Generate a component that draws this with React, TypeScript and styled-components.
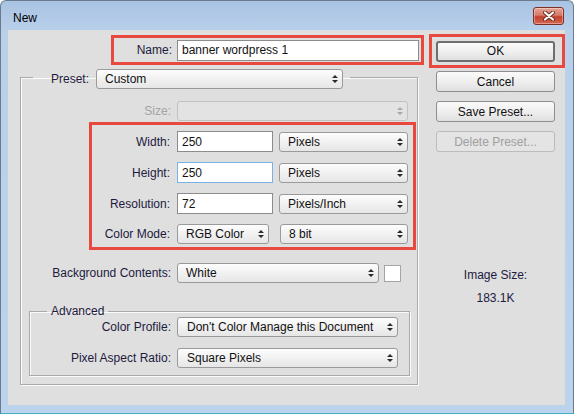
import React from "react";
import styled, { createGlobalStyle } from "styled-components";

const GlobalStyle = createGlobalStyle`
  html, body {
    margin: 0;
    padding: 0;
    background: #ffffff;
  }
  body {
    font-family: "Liberation Sans", Arial, sans-serif;
    font-size: 12px;
    color: #1d1a3d;
  }
  * {
    box-sizing: border-box;
  }
`;

const RED = "#e8483e";

const Window = styled.div`
  width: 574px;
  height: 414px;
  display: flex;
  flex-direction: column;
  padding: 0 8px 8px 7px;
  background: linear-gradient(#a9c3e2, #b9d0eb 30px, #bcd3ee);
  border: 1px solid #6b7b8e;
  border-bottom-color: #3fb2c6;
  border-radius: 6px 6px 0 0;
`;

const TitleBar = styled.div`
  height: 29px;
  flex: none;
  display: flex;
  align-items: center;
  justify-content: space-between;
  padding-left: 5px;
`;

const Title = styled.span`
  color: #000;
  font-size: 12px;
  padding-top: 5px;
`;

const CloseButton = styled.div`
  width: 31px;
  height: 18px;
  margin-right: 1px;
  margin-top: 1px;
  border: 1px solid #7d3126;
  border-radius: 3px;
  background: linear-gradient(#e8a597, #d47a68 45%, #c2412f 55%, #d6664f);
  box-shadow: inset 0 0 0 1px rgba(255, 255, 255, 0.35);
  display: flex;
  align-items: center;
  justify-content: center;
`;

const Client = styled.div`
  flex: 1;
  display: flex;
  background: #dfdfdf;
`;

const LeftColumn = styled.div`
  width: 421px;
  flex: none;
  display: flex;
  flex-direction: column;
  align-items: flex-start;
`;

const RightColumn = styled.div`
  flex: 1;
  display: flex;
  flex-direction: column;
  align-items: flex-start;
`;

const Callout = styled.div`
  border: 3px solid ${RED};
`;

const NameCallout = styled(Callout)`
  margin: 5px 0 0 103px;
  width: 313px;
  height: 30px;
  display: flex;
  align-items: center;
`;

const DimensionsCallout = styled(Callout)`
  margin: 1px 0 0 68px;
  width: 327px;
  padding: 6px 0 3px 0;
  display: flex;
  flex-direction: column;
  gap: 10px;
`;

const OkCallout = styled(Callout)`
  margin-top: 4px;
  width: 136px;
  height: 34px;
  padding-left: 4px;
  display: flex;
  align-items: center;
`;

const GroupBox = styled.fieldset`
  margin: 0;
  padding: 0;
  min-width: 0;
  border: 1px solid #a9a9a9;
  box-shadow: 1px 1px 0 #fbfbfb, inset 1px 1px 0 #fbfbfb;
  display: flex;
  flex-direction: column;
  align-items: flex-start;
`;

const PresetGroup = styled(GroupBox)`
  margin-left: 12px;
  width: 398px;
  padding-bottom: 8px;
`;

const AdvancedGroup = styled(GroupBox)`
  margin: 21px 0 0 8px;
  width: 381px;
  padding-bottom: 7px;
  gap: 11px;
`;

const PresetLegend = styled.legend`
  margin-left: 12px;
  padding: 4px 7px 0 0;
  display: flex;
  align-items: center;
  gap: 7px;
`;

const TextLegend = styled.legend`
  margin-left: 17px;
  padding: 0 4px;
  line-height: 14px;
  color: #1d1a3d;
`;

const Row = styled.div<{ $top?: number; $gap?: number }>`
  display: flex;
  align-items: center;
  gap: ${(p) => p.$gap ?? 6}px;
  margin-top: ${(p) => p.$top ?? 0}px;
`;

const Label = styled.label<{ $width: number; $disabled?: boolean }>`
  width: ${(p) => p.$width}px;
  flex: none;
  text-align: right;
  white-space: nowrap;
  color: ${(p) => (p.$disabled ? "#a3a3a3" : "#1d1a3d")};
`;

const TextInput = styled.input<{ $width: number; $focused?: boolean }>`
  width: ${(p) => p.$width}px;
  height: 21px;
  flex: none;
  margin: 0;
  padding: 0 4px;
  font: inherit;
  color: #111;
  background: #fff;
  border: 1px solid ${(p) => (p.$focused ? "#7eb1e3" : "#8c8c8c")};
  border-radius: 0;
  outline: none;
`;

const SelectBox = styled.div<{ $width: number; $disabled?: boolean; $pad?: number }>`
  width: ${(p) => p.$width}px;
  height: 20px;
  flex: none;
  display: flex;
  align-items: center;
  justify-content: space-between;
  padding: 0 4px 0 ${(p) => p.$pad ?? 8}px;
  border: 1px solid ${(p) => (p.$disabled ? "#c2c2c2" : "#9a9a9a")};
  border-radius: 3px;
  background: ${(p) =>
    p.$disabled ? "#e3e3e3" : "linear-gradient(#fdfdfd, #f1f1f1 50%, #e6e6e6)"};
  color: #111;
  white-space: nowrap;
`;

const Swatch = styled.div`
  width: 17px;
  height: 17px;
  flex: none;
  background: #fff;
  border: 1px solid #a5a5a5;
`;

const Button = styled.div<{ $primary?: boolean; $disabled?: boolean; $top?: number }>`
  width: 119px;
  height: 21px;
  margin-top: ${(p) => p.$top ?? 0}px;
  margin-left: ${(p) => (p.$primary ? 0 : 7)}px;
  display: flex;
  align-items: center;
  justify-content: center;
  border: ${(p) =>
    p.$primary ? "2px solid #6e6e6e" : `1px solid ${p.$disabled ? "#bcbcbc" : "#8e8e8e"}`};
  border-radius: 3px;
  background: ${(p) =>
    p.$disabled ? "#e4e4e4" : "linear-gradient(#fafafa, #efefef 50%, #e0e0e0)"};
  color: ${(p) => (p.$disabled ? "#a0a0a0" : "#111")};
`;

const InfoText = styled.div<{ $top: number }>`
  width: 119px;
  margin: ${(p) => p.$top}px 0 0 7px;
  line-height: 14px;
  text-align: center;
  color: #1d1a3d;
`;

const Arrows: React.FC<{ disabled?: boolean }> = ({ disabled }) => (
  <svg width="6" height="10" viewBox="0 0 6 10">
    <path d="M0 4 L3 1 L6 4 Z M0 6 L3 9 L6 6 Z" fill={disabled ? "#a8a8a8" : "#2a2a2a"} />
  </svg>
);

const Select: React.FC<{
  width: number;
  value?: string;
  disabled?: boolean;
  pad?: number;
}> = ({ width, value, disabled, pad }) => (
  <SelectBox $width={width} $disabled={disabled} $pad={pad}>
    <span>{value}</span>
    <Arrows disabled={disabled} />
  </SelectBox>
);

const dimensions = [
  { label: "Width:", value: "250", unit: "Pixels" },
  { label: "Height:", value: "250", unit: "Pixels", focused: true },
  { label: "Resolution:", value: "72", unit: "Pixels/Inch" },
];

export default function App() {
  return (
    <>
      <GlobalStyle />
      <Window>
        <TitleBar>
          <Title>New</Title>
          <CloseButton>
            <svg width="12" height="10" viewBox="0 0 12 10">
              <path d="M2 1.5 L10 8.5 M10 1.5 L2 8.5" stroke="#6b2a20" strokeWidth="4" strokeLinecap="round" />
              <path d="M2 1.5 L10 8.5 M10 1.5 L2 8.5" stroke="#ffffff" strokeWidth="2.2" strokeLinecap="round" />
            </svg>
          </CloseButton>
        </TitleBar>
        <Client>
          <LeftColumn>
            <NameCallout>
              <Row $gap={5}>
                <Label $width={58}>Name:</Label>
                <TextInput $width={242} defaultValue="banner wordpress 1" />
              </Row>
            </NameCallout>

            <PresetGroup>
              <PresetLegend>
                <Label $width={56}>Preset:</Label>
                <Select width={247} value="Custom" />
              </PresetLegend>

              <Row $top={12}>
                <Label $width={150} $disabled>
                  Size:
                </Label>
                <Select width={231} disabled />
              </Row>

              <DimensionsCallout>
                {dimensions.map((d) => (
                  <Row key={d.label} $gap={7}>
                    <Label $width={78}>{d.label}</Label>
                    <Row>
                      <TextInput $width={96} $focused={d.focused} defaultValue={d.value} />
                      <Select width={129} value={d.unit} />
                    </Row>
                  </Row>
                ))}
                <Row $gap={7}>
                  <Label $width={78}>Color Mode:</Label>
                  <Row $gap={11}>
                    <Select width={92} value="RGB Color" />
                    <Select width={128} value="8 bit" />
                  </Row>
                </Row>
              </DimensionsCallout>

              <Row $top={13}>
                <Label $width={150}>Background Contents:</Label>
                <Row $gap={5}>
                  <Select width={202} value="White" />
                  <Swatch />
                </Row>
              </Row>

              <AdvancedGroup>
                <TextLegend>Advanced</TextLegend>
                <Row $top={-1}>
                  <Label $width={141}>Color Profile:</Label>
                  <Select width={221} value="Don't Color Manage this Document" pad={9} />
                </Row>
                <Row>
                  <Label $width={141}>Pixel Aspect Ratio:</Label>
                  <Select width={221} value="Square Pixels" pad={9} />
                </Row>
              </AdvancedGroup>
            </PresetGroup>
          </LeftColumn>

          <RightColumn>
            <OkCallout>
              <Button $primary>OK</Button>
            </OkCallout>
            <Button $top={3}>Cancel</Button>
            <Button $top={9}>Save Preset...</Button>
            <Button $top={9} $disabled>
              Delete Preset...
            </Button>
            <InfoText $top={116}>Image Size:</InfoText>
            <InfoText $top={9}>183.1K</InfoText>
          </RightColumn>
        </Client>
      </Window>
    </>
  );
}
